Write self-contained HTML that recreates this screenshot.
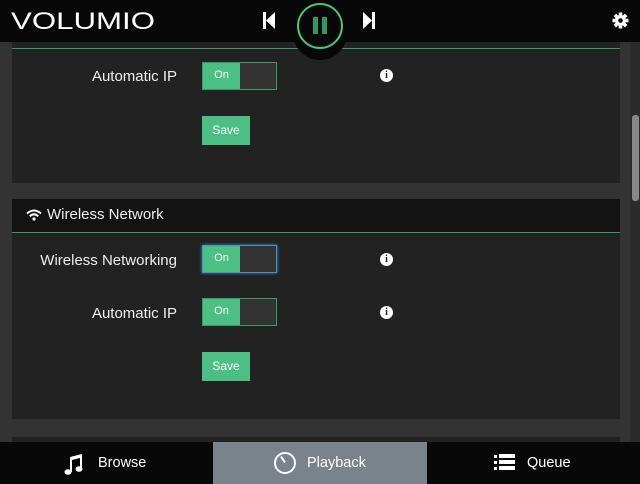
<!DOCTYPE html>
<html><head><style>
*{margin:0;padding:0;box-sizing:border-box}
body{width:640px;height:484px;background:#333;font-family:"Liberation Sans",sans-serif;overflow:hidden;position:relative;color:#eee}
.abs{position:absolute}
.hdr{left:0;top:0;width:640px;height:42px;background:#080808}
.panel{background:#222;left:12px;width:608px}
.lbl{font-size:15px;color:#eee;text-align:right;width:165px;left:12px}
.tog{width:75px;height:28px;border:1px solid #3c9a68;background:#333}
.tog .on{position:absolute;left:0;top:0;width:37px;height:26px;background:#4cbf84;color:#fff;font-size:11px;text-align:center;line-height:25px}
.save{width:48px;height:29px;background:#4cbf84;color:#fff;font-size:12px;text-align:center;line-height:29px}
.info{width:13px;height:13px;border-radius:50%;background:#fff;color:#222;font:bold 10px "Liberation Serif",serif;text-align:center;line-height:13px}
.ft{top:442px;height:42px;background:#080808;width:640px;left:0}
.tab{top:442px;height:42px;font-size:14.5px;color:#fff;line-height:42px}
</style></head><body>
<div class="abs hdr"></div>
<svg class="abs" style="left:10px;top:6px" width="150" height="30"><text x="1" y="23" font-family="Liberation Sans" font-size="24" textLength="144" lengthAdjust="spacingAndGlyphs" fill="#fff">VOLUMIO</text></svg>
<div class="abs panel" style="top:42px;height:141px"></div>
<div class="abs" style="left:12px;top:48px;width:608px;height:1px;background:#3c9a68"></div>
<div class="abs" style="left:293px;top:0;width:54px;height:60px;border-radius:0 0 27px 27px;background:#080808"></div>
<div class="abs" style="left:297px;top:3px;width:46px;height:46px;border:2px solid #4cbf84;border-radius:50%"></div>
<div class="abs" style="left:313px;top:17px;width:5px;height:17px;background:#2f9a5f"></div>
<div class="abs" style="left:322px;top:17px;width:5px;height:17px;background:#2f9a5f"></div>
<svg class="abs" style="left:263px;top:12px" width="14" height="17"><rect x="0" y="0" width="3" height="17" fill="#fff"/><path d="M3 8.5L12 0V17Z" fill="#fff"/></svg>
<svg class="abs" style="left:362px;top:12px" width="14" height="17"><rect x="10" y="0" width="3" height="17" fill="#fff"/><path d="M10 8.5L1 0V17Z" fill="#fff"/></svg>
<svg class="abs" style="left:612px;top:12px" width="17" height="17" viewBox="-8.5 -8.5 17 17"><g fill="#fff"><circle r="5.5"/><rect x="-1.8" y="-8" width="3.6" height="16"/><rect x="-1.8" y="-8" width="3.6" height="16" transform="rotate(45)"/><rect x="-1.8" y="-8" width="3.6" height="16" transform="rotate(90)"/><rect x="-1.8" y="-8" width="3.6" height="16" transform="rotate(135)"/></g><circle r="2.3" fill="#080808"/></svg>
<div class="abs" style="left:630px;top:42px;width:10px;height:400px;background:#2b2b2b"></div>
<div class="abs" style="left:632px;top:115px;width:7px;height:86px;background:#888;border-radius:3px"></div>

<div class="abs lbl" style="top:68px">Automatic IP</div>
<div class="abs tog" style="left:202px;top:62px"><div class="on">On</div></div>
<div class="abs info" style="left:380px;top:69px">i</div>
<div class="abs save" style="left:202px;top:116px">Save</div>

<div class="abs" style="left:12px;top:199px;width:608px;height:33px;background:#131313"></div>
<div class="abs" style="left:12px;top:232px;width:608px;height:1px;background:#3c9a68"></div>
<svg class="abs" style="left:26px;top:209px" width="16" height="12" viewBox="0 0 16 12"><g fill="none" stroke="#fff" stroke-width="2"><path d="M1 4.5Q8 -1.5 15 4.5"/><path d="M3.8 7.2Q8 3.5 12.2 7.2"/></g><circle cx="8" cy="10" r="1.6" fill="#fff"/></svg>
<div class="abs" style="left:47px;top:206px;font-size:15px">Wireless Network</div>
<div class="abs panel" style="top:233px;height:186px"></div>
<div class="abs lbl" style="top:252px">Wireless Networking</div>
<div class="abs tog" style="left:202px;top:245px;border-color:#4a90c8;box-shadow:0 0 3px #4a90c8"><div class="on">On</div></div>
<div class="abs info" style="left:380px;top:253px">i</div>
<div class="abs lbl" style="top:305px">Automatic IP</div>
<div class="abs tog" style="left:202px;top:298px"><div class="on">On</div></div>
<div class="abs info" style="left:380px;top:306px">i</div>
<div class="abs save" style="left:202px;top:352px">Save</div>
<div class="abs panel" style="top:437px;height:5px;background:#222"></div>

<div class="abs ft"></div>
<div class="abs" style="left:213px;top:442px;width:214px;height:42px;background:#7a828b"></div>
<svg class="abs" style="left:64px;top:453px" width="20" height="22" viewBox="0 0 20 22"><g fill="#fff"><path d="M6 4L18 1V16H16V5L8 7V19H6Z"/><ellipse cx="4" cy="19" rx="3.5" ry="2.8"/><ellipse cx="15" cy="16" rx="3.5" ry="2.8"/></g></svg>
<div class="abs tab" style="left:98px">Browse</div>
<div class="abs" style="left:274px;top:452px;width:22px;height:22px;border:2px solid #fff;border-radius:50%"></div>
<div class="abs" style="left:282px;top:456px;width:2px;height:7px;background:#fff;transform:rotate(-35deg)"></div>
<div class="abs tab" style="left:307px">Playback</div>
<svg class="abs" style="left:494px;top:454px" width="22" height="18"><g fill="#fff"><rect x="0" y="1" width="3" height="3"/><rect x="5" y="0" width="16" height="4"/><rect x="0" y="7" width="3" height="3"/><rect x="5" y="6" width="16" height="4"/><rect x="0" y="13" width="3" height="3"/><rect x="5" y="12" width="16" height="4"/></g></svg>
<div class="abs tab" style="left:527px">Queue</div>
</body></html>
